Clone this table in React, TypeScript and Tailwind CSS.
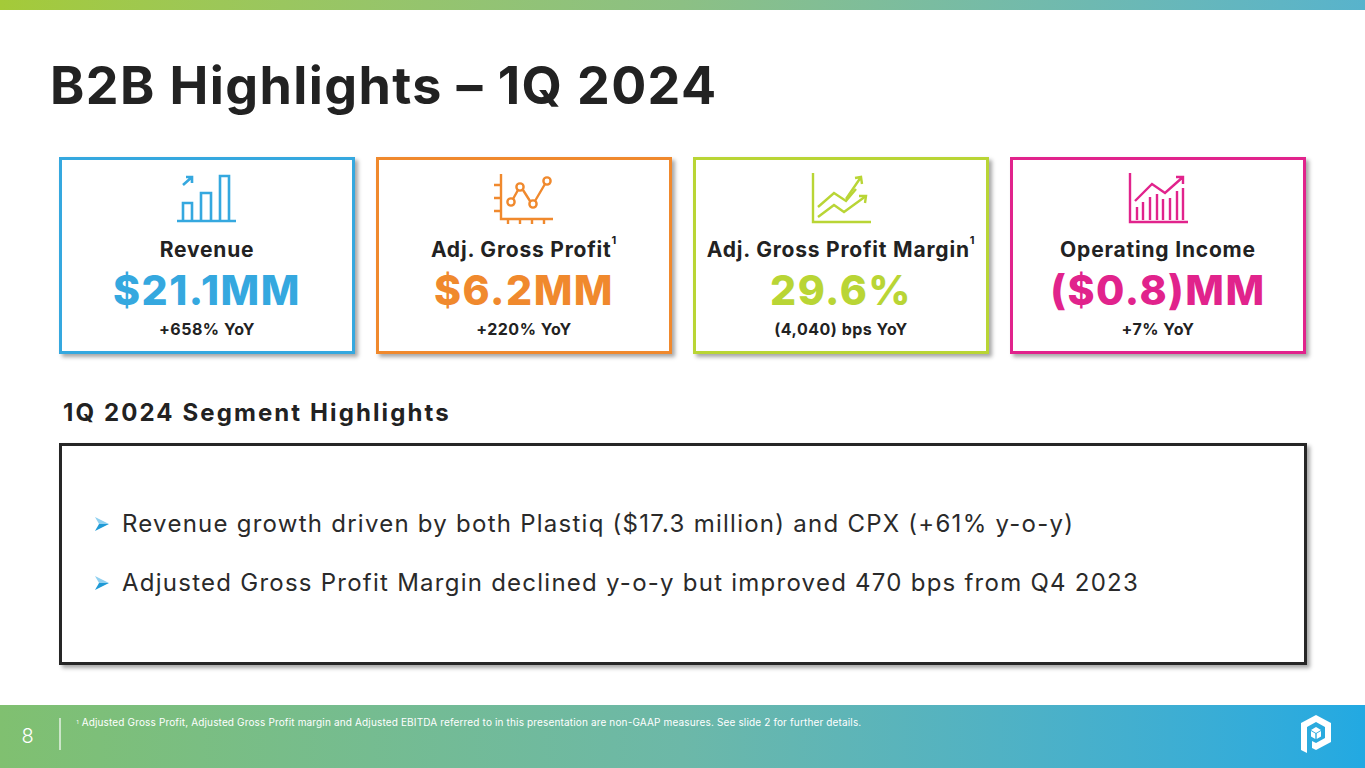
import React from "react";

const font = { fontFamily: "Inter, 'Open Sans', sans-serif" };

function RevenueIcon() {
  return (
    <svg width="62" height="52" viewBox="0 0 62 52" fill="none" stroke="#35a8df" strokeWidth="2.6">
      <path d="M7 13 L16 5 M10 5 L16 5 L16 11" />
      <path d="M7 48 V31 H16 V48" />
      <path d="M25 48 V21 H35 V48" />
      <path d="M44 48 V4 H53 V48" />
      <path d="M1 49 H60" />
    </svg>
  );
}

function GrossProfitIcon() {
  return (
    <svg width="62" height="52" viewBox="0 0 62 52" fill="none" stroke="#f0892d" strokeWidth="2.4">
      <path d="M8 2 V47 H60" />
      <path d="M1 13 H8 M1 26 H8 M1 39 H8" />
      <path d="M15 47 V52 M27 47 V52 M39 47 V52 M51 47 V52" />
      <path d="M20 27 L25 18 M30 18 L37 29 M42 29 L52 12" />
      <circle cx="18" cy="30" r="3.6" />
      <circle cx="27" cy="15" r="3.6" />
      <circle cx="40" cy="32" r="3.6" />
      <circle cx="54" cy="9" r="3.6" />
    </svg>
  );
}

function MarginIcon() {
  return (
    <svg width="62" height="52" viewBox="0 0 62 52" fill="none" stroke="#b9d535" strokeWidth="2.4">
      <path d="M3 1 V50 H61" />
      <path d="M8 35 L24 21 L36 29 L46 17" />
      <path d="M8 45 L24 33 L34 40 L56 24" />
      <path d="M36 27 L51 5 M45 6 L51 5 L52 12" />
      <path d="M49 24 L56 24 L55 31" />
    </svg>
  );
}

function OperatingIcon() {
  return (
    <svg width="62" height="52" viewBox="0 0 62 52" fill="none" stroke="#e1238c" strokeWidth="2.4">
      <path d="M3 1 V50 H61" />
      <path d="M8 29 L25 12 L38 21 L56 5 M49 5 L56 5 L56 12" />
      <path d="M10 35 V48 M16 30 V48 M23 25 V48 M30 22 V48 M36 27 V48 M43 26 V48 M50 19 V48 M56 16 V48" />
    </svg>
  );
}

function Card({
  border,
  color,
  icon,
  label,
  sup,
  value,
  sub,
}: {
  border: string;
  color: string;
  icon: React.ReactNode;
  label: string;
  sup?: boolean;
  value: string;
  sub: string;
}) {
  return (
    <div
      className={`w-[296px] h-[197px] border-[3px] ${border} bg-white shadow-[3px_3px_4px_rgba(0,0,0,0.35)] flex flex-col items-center pt-[12px]`}
    >
      <div className="h-[52px] flex items-center justify-center">{icon}</div>
      <div className="mt-[14px] text-[21px] leading-[24px] font-bold text-[#222222] tracking-[0.8px] whitespace-nowrap">
        {label}
        {sup && <sup className="text-[11px] align-top relative top-[2px]">1</sup>}
      </div>
      <div className={`mt-[6px] text-[41px] leading-[44px] font-extrabold ${color} tracking-[1.5px]`}>{value}</div>
      <div className="mt-[7px] text-[16px] leading-[20px] font-bold text-[#222222] tracking-[0.5px]">{sub}</div>
    </div>
  );
}

function BulletArrow() {
  return (
    <svg width="16" height="16" viewBox="0 0 16 16">
      <polygon points="1,1 15,8 5,8" fill="#8fd0f0" />
      <polygon points="1,15 15,8 5,8" fill="#1f9ad6" />
    </svg>
  );
}

function Logo() {
  return (
    <svg width="32" height="40" viewBox="0 0 32 40" fill="white">
      <path d="M16 0 L31 8 V27 L16 35 L12 33 V26 L16 28 L25 23 V12 L16 7 L7 12 V38 L1 35 V8 Z" />
      <path d="M16 12 L21 15 L16 18 L11 15 Z" />
      <path d="M11 16 L15.3 18.5 V24 L11 21.5 Z" />
      <path d="M21 16 L16.7 18.5 V24 L21 21.5 Z" />
    </svg>
  );
}

export default function App() {
  return (
    <div className="w-[1365px] h-[768px] bg-white flex flex-col overflow-hidden" style={font}>
      <div className="h-[10px] w-full bg-gradient-to-r from-[#a4ca38] via-[#8cc084] to-[#58b3cc]" />
      <div className="pl-[50px] pt-[46px] h-[147px]">
        <h1 className="text-[52px] leading-[60px] font-bold text-[#222222] tracking-[1.4px]">B2B Highlights – 1Q 2024</h1>
      </div>
      <div className="pl-[59px] flex gap-[21px]">
        <Card border="border-[#35a8df]" color="text-[#35a8df]" icon={<RevenueIcon />} label="Revenue" value="$21.1MM" sub="+658% YoY" />
        <Card border="border-[#f0892d]" color="text-[#f0892d]" icon={<GrossProfitIcon />} label="Adj. Gross Profit" sup value="$6.2MM" sub="+220% YoY" />
        <Card border="border-[#b9d535]" color="text-[#b9d535]" icon={<MarginIcon />} label="Adj. Gross Profit Margin" sup value="29.6%" sub="(4,040) bps YoY" />
        <Card border="border-[#e1238c]" color="text-[#e1238c]" icon={<OperatingIcon />} label="Operating Income" value="($0.8)MM" sub="+7% YoY" />
      </div>
      <div className="pl-[63px] mt-[44px] text-[24px] leading-[30px] font-bold text-[#222222] tracking-[2.1px]">1Q 2024 Segment Highlights</div>
      <div className="ml-[59px] mt-[15px] w-[1248px] h-[222px] border-[3px] border-[#262626] shadow-[3px_3px_4px_rgba(0,0,0,0.35)] flex flex-col justify-center pl-[32px] gap-[27px] pb-[2px]">
        <div className="flex items-center gap-[12px]">
          <BulletArrow />
          <span className="text-[24px] leading-[32px] text-[#2a2a2a] tracking-[1.25px]">
            Revenue growth driven by both Plastiq ($17.3 million) and CPX (+61% y-o-y)
          </span>
        </div>
        <div className="flex items-center gap-[12px]">
          <BulletArrow />
          <span className="text-[24px] leading-[32px] text-[#2a2a2a] tracking-[1.25px]">
            Adjusted Gross Profit Margin declined y-o-y but improved 470 bps from Q4 2023
          </span>
        </div>
      </div>
      <div className="mt-auto h-[63px] w-full bg-gradient-to-r from-[#80c070] via-[#6cb8a8] to-[#22a9e2] flex items-start relative">
        <div className="w-[59px] h-full flex items-center justify-center text-white text-[20px] font-light pb-[2px] pr-[4px]">8</div>
        <div className="mt-[13px] w-[1.5px] h-[32px] bg-white/60" />
        <div className="ml-[16px] mt-[11px] text-[10px] leading-[12px] text-white tracking-[0.15px]">
          <sup className="text-[5px]">1</sup> Adjusted Gross Profit, Adjusted Gross Profit margin and Adjusted EBITDA referred to in this presentation are non-GAAP measures. See slide 2 for further details.
        </div>
        <div className="absolute right-[33px] top-[10px]">
          <Logo />
        </div>
      </div>
    </div>
  );
}
